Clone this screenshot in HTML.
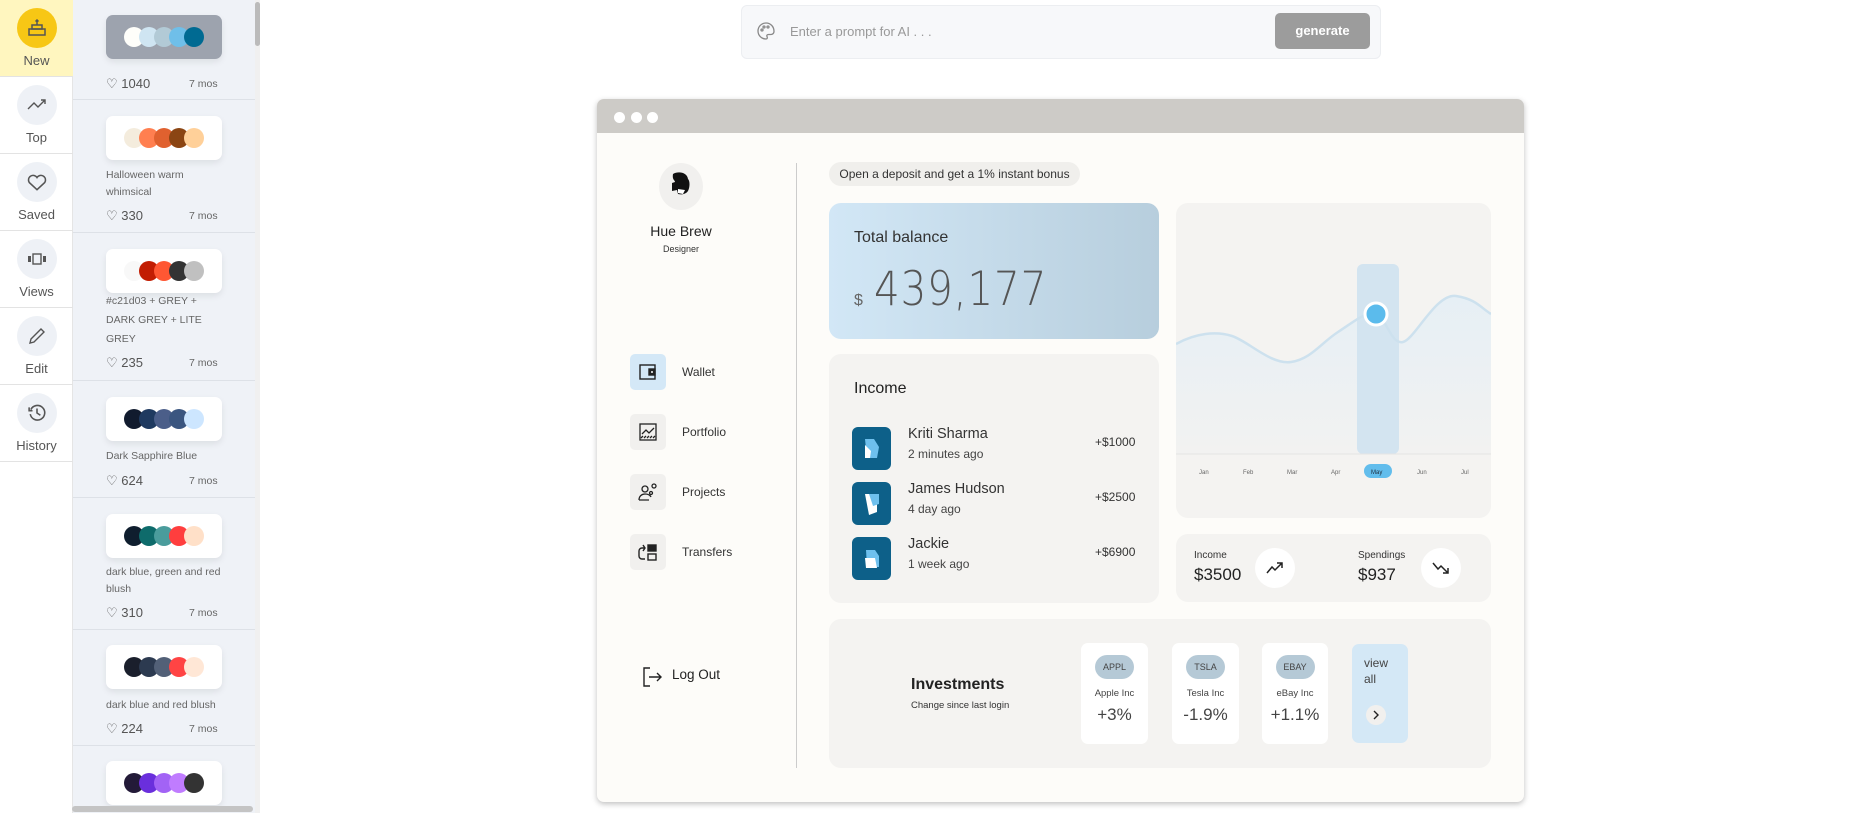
<!DOCTYPE html>
<html><head><meta charset="utf-8"><style>
*{box-sizing:border-box;margin:0;padding:0}
body{width:1857px;height:813px;overflow:hidden;background:#fff;font-family:"Liberation Sans",sans-serif;position:relative;color:#222}
.abs{position:absolute}
.nav{left:0;top:0;width:73px;height:813px;border-right:1px solid #e5e5e5;background:#fff}
.ni{position:absolute;left:0;width:73px;height:77px;border-bottom:1px solid #e3e3e3;text-align:center;font-size:13px;color:#555}
.ni .c{width:40px;height:40px;border-radius:50%;background:#eef1f6;margin:8px auto 5px;display:flex;align-items:center;justify-content:center}
.col{left:73px;top:0;width:182px;height:813px;background:#eff2f7}
.sep{position:absolute;left:0;width:182px;height:1px;background:#dde1e7}
.pc{position:absolute;left:33px;width:116px;height:44px;background:#fff;border-radius:7px;box-shadow:0 3px 7px rgba(0,0,0,.08);display:flex;justify-content:center;align-items:center}
.pc i{width:20px;height:20px;border-radius:50%;margin-left:-5px;display:block}
.pc i:first-child{margin-left:0}
.pn{position:absolute;left:33px;font-size:10.5px;color:#666;line-height:17px;width:130px}
.lk{position:absolute;left:33px;font-size:13px;color:#555}
.mo{position:absolute;left:116px;font-size:10.5px;color:#666}
.card{position:absolute;border-radius:12px;background:#f4f3f1}
.navr{position:absolute;left:630px;width:36px;height:36px;border-radius:5px;background:#f1f0ee;display:flex;align-items:center;justify-content:center}
.navt{position:absolute;left:682px;font-size:12px;color:#333}
.inc{position:absolute;left:852px;width:39px;height:43px;border-radius:6px;background:#0d6089}
.st{position:absolute;top:643px;width:67px;height:101px;background:#fff;border-radius:7px;text-align:center}
.st b{display:block;margin:12px auto 0;width:39px;height:24px;border-radius:12px;background:#b5c9d6;font-weight:normal;font-size:9px;line-height:24px;color:#444}
.st span{display:block;font-size:9.5px;color:#444;margin-top:9px}
.st em{display:block;font-style:normal;font-size:17px;color:#444;margin-top:6px}
</style></head><body>
<div class="abs nav">
 <div class="ni" style="top:0;background:#fff6bf"><div class="c" style="background:#f7c715"><svg width="20" height="18" viewBox="0 0 20 18" fill="none" stroke="#555" stroke-width="1.5"><rect x="2" y="10" width="16" height="6"/><rect x="5" y="6" width="10" height="4"/><path d="M10 6V1M8.5 2.5L10 1l1.5 1.5"/></svg></div>New</div>
 <div class="ni" style="top:77px"><div class="c"><svg width="20" height="12" viewBox="0 0 20 12" fill="none" stroke="#555" stroke-width="1.4"><path d="M1 10l6-6 4 4 7-7M14 1h4v4"/></svg></div>Top</div>
 <div class="ni" style="top:154px"><div class="c"><svg width="20" height="17" viewBox="0 0 18 15" fill="none" stroke="#555" stroke-width="1.4"><path d="M9 14L2 7.5A4 4 0 019 3a4 4 0 017 4.5z"/></svg></div>Saved</div>
 <div class="ni" style="top:231px"><div class="c"><svg width="20" height="14" viewBox="0 0 20 12" fill="#555"><rect x="6" y="1" width="8" height="10" fill="none" stroke="#555" stroke-width="1.4"/><rect x="1" y="3" width="3" height="6"/><rect x="16" y="3" width="3" height="6"/></svg></div>Views</div>
 <div class="ni" style="top:308px"><div class="c"><svg width="18" height="18" viewBox="0 0 18 16" fill="none" stroke="#555" stroke-width="1.4"><path d="M2 15l1-4L13 1l3 3L6 14z"/></svg></div>Edit</div>
 <div class="ni" style="top:385px"><div class="c"><svg width="18" height="18" viewBox="0 0 16 16" fill="none" stroke="#555" stroke-width="1.4"><path d="M2.5 5A6.5 6.5 0 112 9"/><path d="M1 3v3h3M8 4v4l3 2"/></svg></div>History</div>
</div>
<div class="abs col">
 <div class="pc" style="top:15px;background:#9da3ae"><i style="background:#fefefa"></i><i style="background:#cfe5f2"></i><i style="background:#b2cad6"></i><i style="background:#6fbfe9"></i><i style="background:#006a92"></i></div>
 <div class="lk" style="top:76px">♡ 1040</div><div class="mo" style="top:78px">7 mos</div><div class="sep" style="top:99px"></div>
 <div class="pc" style="top:116px"><i style="background:#f4ecdd"></i><i style="background:#ff7f50"></i><i style="background:#e0612f"></i><i style="background:#8b4513"></i><i style="background:#ffd099"></i></div>
 <div class="pn" style="top:167px">Halloween warm<br>whimsical</div><div class="lk" style="top:208px">♡ 330</div><div class="mo" style="top:210px">7 mos</div><div class="sep" style="top:232px"></div>
 <div class="pc" style="top:249px"><i style="background:#f8f8f8"></i><i style="background:#c21d03"></i><i style="background:#ff5733"></i><i style="background:#333"></i><i style="background:#c0c0c0"></i></div>
 <div class="pn" style="top:292px;line-height:19px">#c21d03 + GREY +<br>DARK GREY + LITE<br>GREY</div><div class="lk" style="top:355px">♡ 235</div><div class="mo" style="top:357px">7 mos</div><div class="sep" style="top:380px"></div>
 <div class="pc" style="top:397px"><i style="background:#111b2e"></i><i style="background:#1f3a60"></i><i style="background:#4b5e89"></i><i style="background:#3b5680"></i><i style="background:#cde6ff"></i></div>
 <div class="pn" style="top:448px">Dark Sapphire Blue</div><div class="lk" style="top:473px">♡ 624</div><div class="mo" style="top:475px">7 mos</div><div class="sep" style="top:497px"></div>
 <div class="pc" style="top:514px"><i style="background:#0f1e2e"></i><i style="background:#0e6b6b"></i><i style="background:#4a9c9c"></i><i style="background:#ff3e3e"></i><i style="background:#ffe0c8"></i></div>
 <div class="pn" style="top:564px">dark blue, green and red<br>blush</div><div class="lk" style="top:605px">♡ 310</div><div class="mo" style="top:607px">7 mos</div><div class="sep" style="top:629px"></div>
 <div class="pc" style="top:645px"><i style="background:#1a1f2c"></i><i style="background:#2c3a50"></i><i style="background:#526077"></i><i style="background:#ff4444"></i><i style="background:#ffe7d6"></i></div>
 <div class="pn" style="top:697px">dark blue and red blush</div><div class="lk" style="top:721px">♡ 224</div><div class="mo" style="top:723px">7 mos</div><div class="sep" style="top:745px"></div>
 <div class="pc" style="top:761px"><i style="background:#231a38"></i><i style="background:#6a2fdc"></i><i style="background:#a263f5"></i><i style="background:#c07cff"></i><i style="background:#333"></i></div>
 <div class="abs" style="left:-1px;top:806px;width:181px;height:6px;border-radius:3px;background:#c4c4c4"></div>
</div>
<div class="abs" style="left:255px;top:0;width:5px;height:813px;background:#f0f0f0"><div style="margin:2px 0 0 0;width:5px;height:44px;border-radius:3px;background:#bbb"></div></div>

<div class="abs" style="left:741px;top:5px;width:640px;height:54px;border-radius:6px;background:#f7f8fa;border:1px solid #eceef1"></div>
<svg class="abs" style="left:757px;top:22px" width="18" height="18" viewBox="0 0 18 18" fill="none" stroke="#888" stroke-width="1.3"><path d="M9 1a8 8 0 000 16c1.5 0 1.5-1.5 1-2.5s0-2 1.5-2H14a3 3 0 003-3C17 4.5 13.5 1 9 1z"/><circle cx="5" cy="8" r="1"/><circle cx="7" cy="5" r="1"/><circle cx="11" cy="5" r="1"/></svg>
<div class="abs" style="left:790px;top:24px;font-size:13px;color:#999">Enter a prompt for AI . . .</div>
<div class="abs" style="left:1275px;top:13px;width:95px;height:36px;border-radius:5px;background:#9c9c9c;color:#fff;font-weight:bold;font-size:13px;text-align:center;line-height:36px">generate</div>

<div class="abs" style="left:597px;top:99px;width:927px;height:703px;border-radius:7px;background:#fdfcf9;box-shadow:0 2px 6px rgba(0,0,0,.25);overflow:hidden">
 <div style="height:34px;background:#cdcbc7;position:relative">
  <i style="position:absolute;left:17px;top:13px;width:11px;height:11px;border-radius:50%;background:#fff"></i>
  <i style="position:absolute;left:34px;top:13px;width:11px;height:11px;border-radius:50%;background:#fff"></i>
  <i style="position:absolute;left:50px;top:13px;width:11px;height:11px;border-radius:50%;background:#fff"></i>
 </div>
</div>
<div class="abs" style="left:659px;top:163px;width:44px;height:47px;border-radius:50%;background:#f1f0ee"></div>
<svg class="abs" style="left:668px;top:171px" width="26" height="30" viewBox="0 0 26 30"><path d="M5 3c5-3 14-2 15 5 2 2 2 8 0 12-2 3-6 4-10 3l-1-4-5 1V12l3-1c0-2-3-2-2-8z" fill="#111"/><path d="M10 18l7 1-2 4-5-1z" fill="#fff"/></svg>
<div class="abs" style="left:600px;top:223px;width:162px;text-align:center;font-size:14px;color:#222">Hue Brew</div>
<div class="abs" style="left:600px;top:244px;width:162px;text-align:center;font-size:9px;color:#333">Designer</div>
<div class="abs" style="left:796px;top:163px;width:1px;height:605px;background:#ccc"></div>

<div class="navr" style="top:354px;background:#d4e8f7"><svg width="20" height="20" viewBox="0 0 20 20" fill="none" stroke="#222" stroke-width="1.4"><rect x="2" y="3" width="15" height="14"/><rect x="11" y="7" width="6" height="6" fill="#222"/><circle cx="14" cy="10" r="1" fill="#fff" stroke="none"/></svg></div>
<div class="navt" style="top:365px">Wallet</div>
<div class="navr" style="top:414px"><svg width="20" height="20" viewBox="0 0 20 20" fill="none" stroke="#222" stroke-width="1.3"><rect x="2" y="2" width="16" height="16"/><path d="M4 12l4-4 3 3 5-5M3 16l2-2M6 16l2-2M9 16l2-2M12 16l2-2M15 16l2-2"/></svg></div>
<div class="navt" style="top:425px">Portfolio</div>
<div class="navr" style="top:474px"><svg width="22" height="20" viewBox="0 0 22 20" fill="none" stroke="#222" stroke-width="1.3"><circle cx="8" cy="7" r="3"/><path d="M2 18c0-4 3-6 6-6s5 1 6 3M2 18h10"/><circle cx="17" cy="4" r="2"/><circle cx="14" cy="11" r="1.5"/></svg></div>
<div class="navt" style="top:485px">Projects</div>
<div class="navr" style="top:534px"><svg width="22" height="20" viewBox="0 0 22 20" fill="none" stroke="#222" stroke-width="1.4"><path d="M8 6H5a3 3 0 00-3 3v5a3 3 0 003 3h3M6 3l2 3-2 3"/><rect x="11" y="3" width="8" height="6" fill="#222"/><rect x="11" y="12" width="8" height="6"/></svg></div>
<div class="navt" style="top:545px">Transfers</div>
<svg class="abs" style="left:641px;top:666px" width="22" height="22" viewBox="0 0 22 22" fill="none" stroke="#222" stroke-width="1.4"><path d="M9 2H3v18h6M8 11h12M16 7l4 4-4 4"/></svg>
<div class="abs" style="left:672px;top:667px;font-size:13.5px;color:#222">Log Out</div>

<div class="abs" style="left:829px;top:162px;width:251px;height:24px;border-radius:12px;background:#f0efec;font-size:12px;color:#333;line-height:24px;text-align:center">Open a deposit and get a 1% instant bonus</div>
<div class="abs" style="left:829px;top:203px;width:330px;height:136px;border-radius:12px;background:linear-gradient(90deg,#d2e7f6,#b7cedd)"></div>
<div class="abs" style="left:854px;top:229px;font-size:16px;color:#333">Total balance</div>
<div class="abs" style="left:854px;top:292px;font-size:16px;color:#666">$</div>
<div class="abs" style="left:874px;top:262px;font-size:47px;color:#555;letter-spacing:1px;font-family:'DejaVu Sans','Liberation Sans',sans-serif;font-weight:200;transform:scaleX(.86);transform-origin:left">439,177</div>

<div class="card" style="left:829px;top:354px;width:330px;height:249px"></div>
<div class="abs" style="left:854px;top:380px;font-size:16px;color:#222">Income</div>
<div class="inc" style="top:427px"></div><div class="inc" style="top:482px"></div><div class="inc" style="top:537px"></div>
<svg class="abs" style="left:861px;top:435px" width="22" height="28" viewBox="0 0 22 28"><path d="M4 4h9l5 8-2 11H6z" fill="#6ec0ee"/><path d="M4 10l6 6-1 7H4z" fill="#fff"/></svg>
<svg class="abs" style="left:861px;top:490px" width="22" height="28" viewBox="0 0 22 28"><path d="M4 4h12v18l-8 3z" fill="#fff"/><path d="M8 4h10v10l-6 2z" fill="#6ec0ee"/></svg>
<svg class="abs" style="left:861px;top:545px" width="22" height="28" viewBox="0 0 22 28"><path d="M5 5h9l4 6v11H6z" fill="#6ec0ee"/><path d="M4 13h10l2 10H5z" fill="#fff"/></svg>
<div class="abs" style="left:908px;top:426px;font-size:14.5px;color:#333">Kriti Sharma</div><div class="abs" style="left:908px;top:447px;font-size:12px;color:#444">2 minutes ago</div><div class="abs" style="left:1095px;top:435px;font-size:12px;color:#333">+$1000</div>
<div class="abs" style="left:908px;top:481px;font-size:14.5px;color:#333">James Hudson</div><div class="abs" style="left:908px;top:502px;font-size:12px;color:#444">4 day ago</div><div class="abs" style="left:1095px;top:490px;font-size:12px;color:#333">+$2500</div>
<div class="abs" style="left:908px;top:536px;font-size:14.5px;color:#333">Jackie</div><div class="abs" style="left:908px;top:557px;font-size:12px;color:#444">1 week ago</div><div class="abs" style="left:1095px;top:545px;font-size:12px;color:#333">+$6900</div>

<div class="card" style="left:1176px;top:203px;width:315px;height:315px;background:#f4f3f1;overflow:hidden">
 <svg width="315" height="315" viewBox="0 0 315 315">
  <defs><linearGradient id="g" x1="0" y1="0" x2="0" y2="1"><stop offset="0" stop-color="#e6eff5"/><stop offset="1" stop-color="#f2f2f1"/></linearGradient></defs>
  <path d="M0 141C20 130 40 128 56 133S95 162 115 159 145 140 162 129 190 108 200 111 215 142 227 139 260 90 280 93 305 105 315 111V251H0z" fill="url(#g)"/>
  <rect x="181" y="61" width="42" height="190" rx="6" fill="#d3e4f0"/>
  <path d="M0 141C20 130 40 128 56 133S95 162 115 159 145 140 162 129 190 108 200 111 215 142 227 139 260 90 280 93 305 105 315 111" fill="none" stroke="#cde1ee" stroke-width="2.5"/>
  <circle cx="200" cy="111" r="11" fill="#5bbbec" stroke="#fff" stroke-width="3"/>
  <line x1="0" y1="251" x2="315" y2="251" stroke="#e4e4e4"/>
  <rect x="188" y="261" width="28" height="14" rx="7" fill="#62bdec"/>
  <g font-size="6" fill="#666" font-family="Liberation Sans"><text x="23" y="271">Jan</text><text x="67" y="271">Feb</text><text x="111" y="271">Mar</text><text x="155" y="271">Apr</text><text x="195" y="271" fill="#234">May</text><text x="241" y="271">Jun</text><text x="285" y="271">Jul</text></g>
 </svg>
</div>

<div class="card" style="left:1176px;top:534px;width:315px;height:68px"></div>
<div class="abs" style="left:1194px;top:550px;font-size:10px;color:#333">Income</div>
<div class="abs" style="left:1194px;top:565px;font-size:17px;color:#222">$3500</div>
<div class="abs" style="left:1255px;top:548px;width:40px;height:40px;border-radius:50%;background:#fff"></div>
<svg class="abs" style="left:1265px;top:558px" width="20" height="20" viewBox="0 0 20 20" fill="none" stroke="#222" stroke-width="1.5"><path d="M2 15l5-6 3 3 7-7M12 5h5v5"/></svg>
<div class="abs" style="left:1358px;top:550px;font-size:10px;color:#333">Spendings</div>
<div class="abs" style="left:1358px;top:565px;font-size:17px;color:#222">$937</div>
<div class="abs" style="left:1421px;top:548px;width:40px;height:40px;border-radius:50%;background:#fff"></div>
<svg class="abs" style="left:1431px;top:558px" width="20" height="20" viewBox="0 0 20 20" fill="none" stroke="#222" stroke-width="1.5"><path d="M2 5l5 6 3-3 7 7M12 15h5v-5"/></svg>

<div class="card" style="left:829px;top:619px;width:662px;height:149px"></div>
<div class="abs" style="left:911px;top:676px;font-size:16px;font-weight:bold;color:#222">Investments</div>
<div class="abs" style="left:911px;top:700px;font-size:9.5px;color:#333">Change since last login</div>
<div class="st" style="left:1081px"><b>APPL</b><span>Apple Inc</span><em>+3%</em></div>
<div class="st" style="left:1172px"><b>TSLA</b><span>Tesla Inc</span><em>-1.9%</em></div>
<div class="st" style="left:1262px;width:66px"><b>EBAY</b><span>eBay Inc</span><em>+1.1%</em></div>
<div class="abs" style="left:1352px;top:644px;width:56px;height:99px;border-radius:7px;background:#d4e8f6"></div>
<div class="abs" style="left:1364px;top:655px;font-size:12px;color:#444;line-height:16px">view<br>all</div>
<div class="abs" style="left:1366px;top:705px;width:20px;height:20px;border-radius:50%;background:#f1f0ee"></div>
<svg class="abs" style="left:1371px;top:710px" width="10" height="10" viewBox="0 0 10 10" fill="none" stroke="#222" stroke-width="1.4"><path d="M3 1l4 4-4 4"/></svg>
</body></html>
